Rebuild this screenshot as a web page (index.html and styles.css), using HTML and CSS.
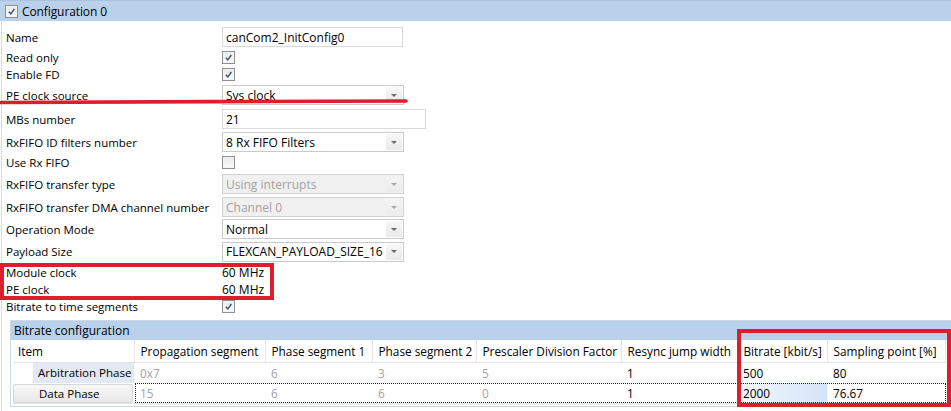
FILE: index.html
```html
<!DOCTYPE html>
<html>
<head>
<meta charset="utf-8">
<link rel="stylesheet" href="styles.css">
</head>
<body>
<div class="screen">
  <div class="titlebar"><span class="cb"><svg viewBox="0 0 10 10"><path d="M2 5.2 L4.2 7.6 L8.2 2.2"/></svg></span><span class="title">Configuration 0</span></div>
  <div class="content">
    <div class="form">
      <div class="row h22"><span class="lbl">Name</span><div class="text w180">canCom2_InitConfig0</div></div>
      <div class="row h18"><span class="lbl">Read only</span><span class="cb"><svg viewBox="0 0 10 10"><path d="M2 5.2 L4.2 7.6 L8.2 2.2"/></svg></span></div>
      <div class="row h17"><span class="lbl">Enable FD</span><span class="cb"><svg viewBox="0 0 10 10"><path d="M2 5.2 L4.2 7.6 L8.2 2.2"/></svg></span></div>
      <div class="row h24"><span class="lbl">PE clock source</span><div class="combo"><span class="val">Sys clock</span><span class="btn"><i class="arrow"></i></span></div></div>
      <div class="row h24"><span class="lbl">MBs number</span><div class="text w203">21</div></div>
      <div class="row h22"><span class="lbl">RxFIFO ID filters number</span><div class="combo"><span class="val">8 Rx FIFO Filters</span><span class="btn"><i class="arrow"></i></span></div></div>
      <div class="row h19"><span class="lbl">Use Rx FIFO</span><span class="cb"></span></div>
      <div class="row h24"><span class="lbl">RxFIFO transfer type</span><div class="combo disabled"><span class="val">Using interrupts</span><span class="btn"><i class="arrow"></i></span></div></div>
      <div class="row h22"><span class="lbl">RxFIFO transfer DMA channel number</span><div class="combo disabled"><span class="val">Channel 0</span><span class="btn"><i class="arrow"></i></span></div></div>
      <div class="row h22"><span class="lbl">Operation Mode</span><div class="combo"><span class="val">Normal</span><span class="btn"><i class="arrow"></i></span></div></div>
      <div class="row h23"><span class="lbl">Payload Size</span><div class="combo"><span class="val">FLEXCAN_PAYLOAD_SIZE_16</span><span class="btn"><i class="arrow"></i></span></div></div>
      <div class="row h18"><span class="lbl">Module clock</span><span class="plain">60 MHz</span></div>
      <div class="row h17"><span class="lbl">PE clock</span><span class="plain">60 MHz</span></div>
      <div class="row h17"><span class="lbl">Bitrate to time segments</span><span class="cb"><svg viewBox="0 0 10 10"><path d="M2 5.2 L4.2 7.6 L8.2 2.2"/></svg></span></div>
    </div>
    <div class="group">
      <div class="group-title">Bitrate configuration</div>
      <table class="grid">
        <colgroup>
          <col class="c1"><col class="c2"><col class="c3"><col class="c4"><col class="c5"><col class="c6"><col class="c7"><col class="c8">
        </colgroup>
        <thead>
          <tr>
            <th>Item</th><th>Propagation segment</th><th>Phase segment 1</th><th>Phase segment 2</th><th>Prescaler Division Factor</th><th>Resync jump width</th><th>Bitrate [kbit/s]</th><th>Sampling point [%]</th>
          </tr>
        </thead>
        <tbody>
          <tr class="r1">
            <td class="item"><span class="item-sel">Arbitration Phase</span></td><td class="ro">0x7</td><td class="ro">6</td><td class="ro">3</td><td class="ro">5</td><td>1</td><td>500</td><td>80</td>
          </tr>
          <tr class="r2">
            <td class="item"><span class="item-btn">Data Phase</span></td><td class="ro">15</td><td class="ro">6</td><td class="ro">6</td><td class="ro">0</td><td>1</td><td class="sel">2000</td><td>76.67</td>
          </tr>
        </tbody>
      </table>
      <div class="focus"></div>
    </div>
  </div>
  <svg class="anno-line" viewBox="0 0 410 8"><path d="M1 4.5 C 100 4, 300 3.2, 406 3"/></svg>
  <div class="anno-box box1"></div>
  <div class="anno-box box2"></div>
</div>
</body>
</html>
```
FILE: styles.css
```css
html, body {
  margin: 0;
  padding: 0;
  background: #fff;
}
body {
  font-family: "Open Sans", "Noto Sans", "Liberation Sans", sans-serif;
  font-size: 11.5px;
  color: #000;
  width: 951px;
  height: 411px;
  overflow: hidden;
}
.screen {
  position: relative;
  width: 951px;
  height: 411px;
}
.titlebar {
  height: 21px;
  background: #b9d1ea;
  border-top: 1px solid #aac2dc;
  display: flex;
  align-items: center;
  padding-left: 5px;
  box-sizing: border-box;
  gap: 4px;
}
.title {
  font-size: 12px;
  letter-spacing: -0.1px;
}
.content {
  margin-left: 1px;
  border-left: 1px solid #d3dde9;
  padding-left: 4px;
  padding-top: 5px;
  height: 385px;
}
.form {
  display: flex;
  flex-direction: column;
}
.row {
  display: flex;
  align-items: center;
}
.h17 { height: 17px; }
.h18 { height: 18px; }
.h19 { height: 19px; }
.h22 { height: 22px; }
.h23 { height: 23px; }
.h24 { height: 24px; }
.lbl {
  width: 216px;
  flex: none;
  white-space: nowrap;
}
.cb {
  width: 11px;
  height: 11px;
  border: 1px solid #8e8f8f;
  background: linear-gradient(#e9e9e9, #fbfbfb);
  box-shadow: inset 0 0 0 1px #f4f4f4;
  display: inline-flex;
  align-items: center;
  justify-content: center;
  flex: none;
}
.cb svg {
  width: 9px;
  height: 9px;
}
.cb path {
  fill: none;
  stroke: #3d5477;
  stroke-width: 1.6;
}
.text {
  height: 18px;
  border: 1px solid #d9d9d9;
  background: #fff;
  display: flex;
  align-items: center;
  padding-left: 3px;
  box-sizing: content-box;
  font-size: 12px;
}
.w180 { width: 176px; }
.w203 { width: 199px; }
.combo {
  width: 180px;
  height: 18px;
  border: 1px solid #cacaca;
  background: #fff;
  display: flex;
  align-items: stretch;
  font-size: 12px;
}
.combo .val {
  flex: 1;
  padding-left: 3px;
  display: flex;
  align-items: center;
  white-space: nowrap;
  overflow: hidden;
}
.combo .btn {
  width: 16px;
  margin: 1px;
  background: linear-gradient(#f7f7f7, #e9e9e9);
  display: flex;
  align-items: center;
  justify-content: center;
}
.arrow {
  width: 0;
  height: 0;
  border-left: 3px solid transparent;
  border-right: 3px solid transparent;
  border-top: 3px solid #6a6a6a;
}
.combo.disabled {
  background: #f0f0f0;
  border-color: #d3d3d3;
  color: #a2a2a2;
}
.combo.disabled .btn {
  background: linear-gradient(#f4f4f4, #ececec);
}
.combo.disabled .arrow {
  border-top-color: #a8a8a8;
}
.plain {
  font-size: 12px;
}
.group {
  position: relative;
  margin-top: 5px;
  margin-left: 4px;
  border: 1px solid #ced9e5;
  border-right: none;
  padding-left: 2px;
  height: 87px;
  box-sizing: border-box;
}
.group-title {
  height: 19px;
  margin-left: -2px;
  background: #b9d1ea;
  padding-left: 3px;
  display: flex;
  align-items: center;
  font-size: 12px;
}
.grid {
  border-collapse: collapse;
  table-layout: fixed;
  width: 932px;
  font-size: 11.8px;
}
.c1 { width: 121px; }
.c2 { width: 131px; }
.c3 { width: 107px; }
.c4 { width: 104px; }
.c5 { width: 145px; }
.c6 { width: 116px; }
.c7 { width: 90px; }
.c8 { width: 118px; }
.grid th {
  height: 22px;
  padding: 0 0 0 6px;
  text-align: left;
  font-weight: normal;
  border-right: 1px solid #e4e4e4;
  border-bottom: 1px solid #e4e4e4;
  white-space: nowrap;
}
.grid th:first-child {
  padding-left: 5px;
}
.grid td {
  height: 20px;
  padding: 0 0 0 6px;
  white-space: nowrap;
}
.grid tbody tr.r2 td {
  border-bottom: 1px solid #e4e4e4;
}
.grid td.ro {
  color: #a3a3a3;
}
.grid td.item {
  padding: 0;
  font-size: 11.5px;
}
.item-sel {
  display: block;
  margin-left: 20px;
  height: 20px;
  line-height: 20px;
  padding-left: 5px;
  background: #e2e9f2;
  overflow: hidden;
}
.item-btn {
  display: block;
  height: 17px;
  line-height: 17px;
  padding-left: 25px;
  margin-right: 1px;
  border: 1px solid #d6d6d6;
  border-radius: 2px;
  background: linear-gradient(#f7f7f7, #e8e8e8);
}
.grid td.sel {
  background: linear-gradient(90deg, #f3f7fc, #d3e4f7);
}
.focus {
  position: absolute;
  left: 124px;
  top: 62px;
  width: 809px;
  height: 18px;
  border: 1px dotted #222;
  pointer-events: none;
}
.anno-line {
  position: absolute;
  left: 0;
  top: 98px;
  width: 410px;
  height: 8px;
}
.anno-line path {
  fill: none;
  stroke: #dc1f2c;
  stroke-width: 3.6;
  stroke-linecap: round;
}
.anno-box {
  position: absolute;
  border: 4px solid #dc1f2c;
  box-sizing: border-box;
}
.box1 {
  left: 0;
  top: 263px;
  width: 274px;
  height: 37px;
}
.box2 {
  left: 737px;
  top: 329px;
  width: 214px;
  height: 78px;
}
```
